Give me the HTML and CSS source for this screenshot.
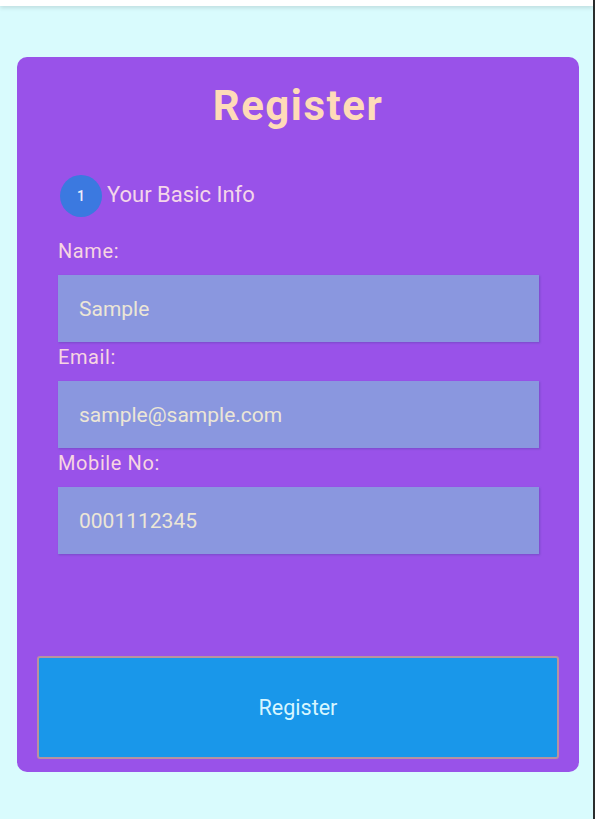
FILE: index.html
```html
<!DOCTYPE html>
<html lang="en">
<head>
<meta charset="utf-8">
<title>Register</title>
<link rel="stylesheet" href="styles.css">
</head>
<body>
<div class="app">
  <header class="topbar"></header>
  <main class="page">
    <form class="card">
      <h1 class="title">Register</h1>
      <div class="step">
        <span class="step-num">1</span>
        <span class="step-label">Your Basic Info</span>
      </div>
      <div class="fields">
        <div class="field">
          <label class="label">Name:</label>
          <div class="input">Sample</div>
        </div>
        <div class="field">
          <label class="label">Email:</label>
          <div class="input">sample@sample.com</div>
        </div>
        <div class="field">
          <label class="label">Mobile No:</label>
          <div class="input">0001112345</div>
        </div>
      </div>
      <button type="button" class="btn">Register</button>
    </form>
  </main>
</div>
</body>
</html>
```

FILE: styles.css
```css
* { box-sizing: border-box; }
html, body { margin: 0; padding: 0; }
body {
  background: #d9fbfd;
  font-family: Roboto, "Liberation Sans", sans-serif;
}
.app {
  min-height: 819px;
  border-right: 2px solid #2a2e2e;
  display: flex;
  flex-direction: column;
}
.topbar {
  height: 6px;
  background: #ffffff;
  box-shadow: 0 2px 4px rgba(0, 0, 0, 0.12);
}
.page {
  padding: 51px 14px 0 17px;
}
.card {
  background: #9952e9;
  border-radius: 10px;
  height: 715px;
  padding: 25px 20px 0 20px;
  display: flex;
  flex-direction: column;
}
.title {
  margin: 0;
  text-align: center;
  color: #fedbb8;
  font-size: 42px;
  font-weight: 700;
  line-height: 48px;
  letter-spacing: 1.5px;
}
.step {
  display: flex;
  align-items: center;
  gap: 5px;
  margin: 45px 0 0 23px;
}
.step-num {
  width: 42px;
  height: 42px;
  border-radius: 50%;
  background: #3b79e0;
  color: #eeeefc;
  font-size: 14px;
  font-weight: 500;
  display: flex;
  align-items: center;
  justify-content: center;
}
.step-label {
  color: #f4d6ea;
  font-size: 22px;
  margin-top: -4px;
}
.fields {
  margin: 19px 20px 0 21px;
  display: flex;
  flex-direction: column;
}
.field {
  display: flex;
  flex-direction: column;
}
.label {
  color: #f7d5e2;
  font-size: 20px;
  letter-spacing: 0.6px;
  line-height: 24px;
  margin-top: 3px;
  margin-bottom: 12px;
}
.input {
  height: 67px;
  background: #8a97df;
  box-shadow: 1px 1px 2px rgba(60, 60, 140, 0.35);
  color: #ece6d6;
  font-size: 21px;
  padding: 0 21px;
  display: flex;
  align-items: center;
}
.btn {
  margin-top: 102px;
  height: 103px;
  flex-shrink: 0;
  width: 100%;
  background: #1997ea;
  border: 2px solid #b8929f;
  border-radius: 3px;
  color: #d6f6ff;
  font-family: Roboto, "Liberation Sans", sans-serif;
  font-size: 21.5px;
}
```
